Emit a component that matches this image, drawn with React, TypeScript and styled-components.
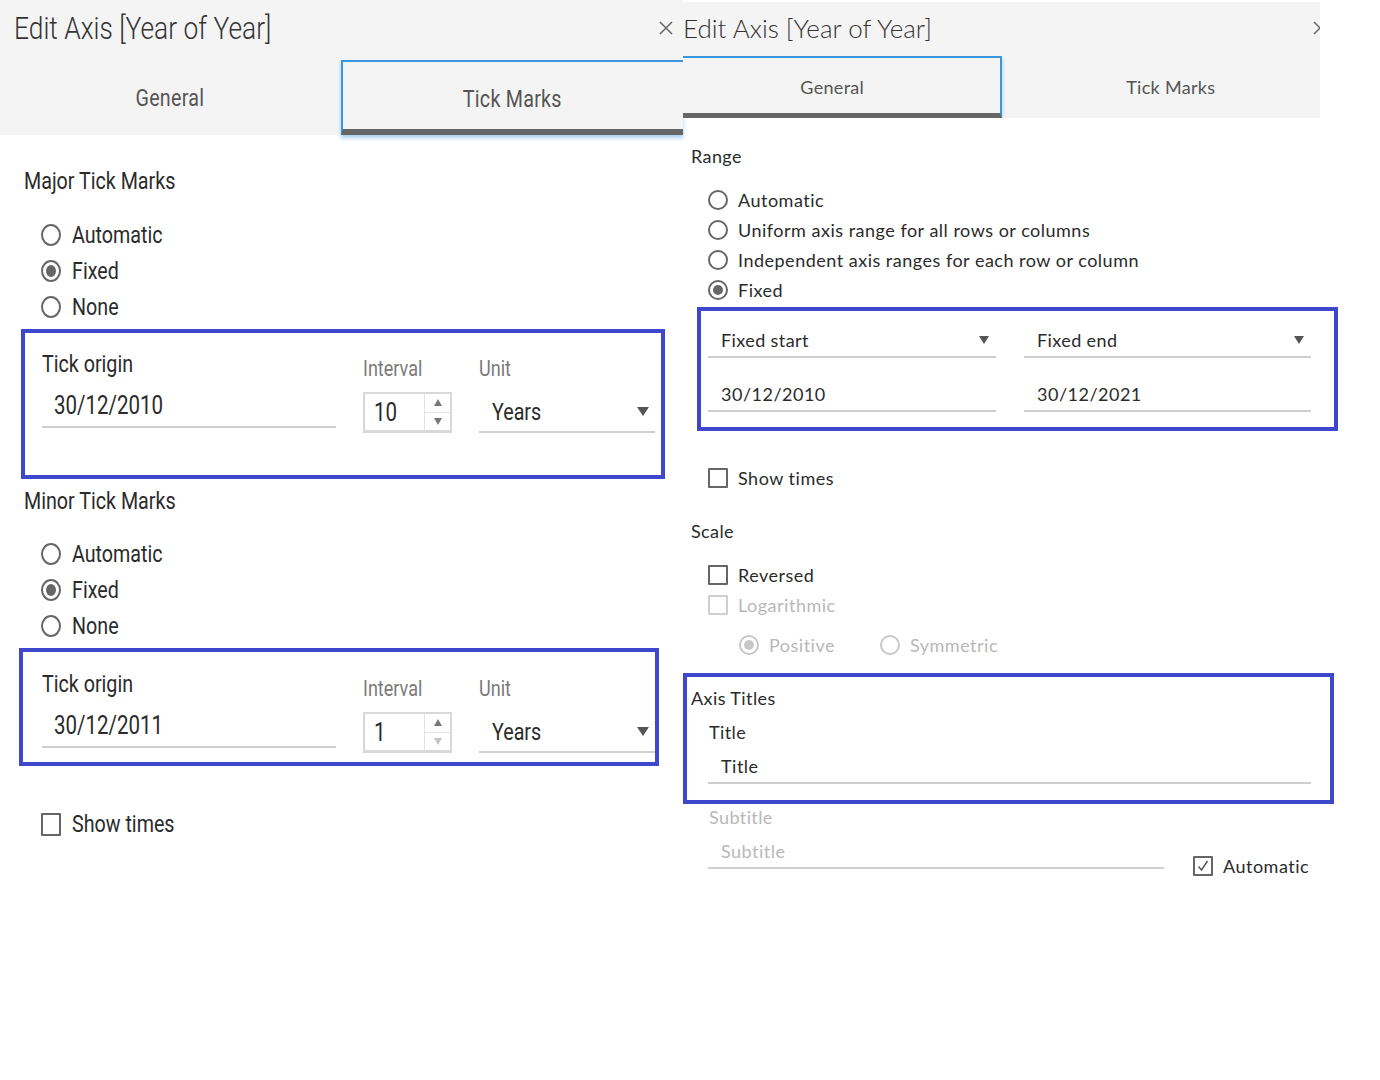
import styled, { createGlobalStyle, css } from 'styled-components';

const NARROW = 'Roboto, "Liberation Sans", sans-serif';
const SANS = 'Lato, "Open Sans", sans-serif';
const INDIGO = '#3f48cc';
const TAB_BLUE = '#3a97dd';

const GlobalStyle = createGlobalStyle`
  html, body {
    margin: 0;
    background: #fff;
  }
  * {
    box-sizing: border-box;
  }
`;

const CloseIcon = () => (
  <svg width="14" height="14" viewBox="0 0 14 14">
    <path d="M1 1 L13 13 M13 1 L1 13" stroke="#666" strokeWidth="1.5" fill="none" />
  </svg>
);

const CheckIcon = () => (
  <svg width="14" height="14" viewBox="0 0 14 14">
    <path d="M2.5 7.5 L5.5 11 L11.5 2" stroke="#555" strokeWidth="1.4" fill="none" />
  </svg>
);

export default function App() {
  return (
    <Page>
      <GlobalStyle />

      {/* left dialog: Tick Marks tab (condensed screenshot) */}
      <LeftPanel>
        <LHeader>
          <LTitleRow>
            <LTitle>
              <Cond $sx={0.85}>Edit Axis [Year of Year]</Cond>
            </LTitle>
            <CloseIcon />
          </LTitleRow>
          <Tabs $h={75}>
            <Tab $size={24}>
              <Cond $center>General</Cond>
            </Tab>
            <Tab $size={24} $active $bar={6} $pad={6} $side="left">
              <Cond $center>Tick Marks</Cond>
            </Tab>
          </Tabs>
        </LHeader>

        <LBody>
          <LSection $mt={33}>
            <Cond>Major Tick Marks</Cond>
          </LSection>
          <LOptions $mt={23}>
            <LOption>
              <Radio $w={20} $h={22} />
              <Cond>Automatic</Cond>
            </LOption>
            <LOption>
              <Radio $w={20} $h={22} $checked />
              <Cond>Fixed</Cond>
            </LOption>
            <LOption>
              <Radio $w={20} $h={22} />
              <Cond>None</Cond>
            </LOption>
          </LOptions>

          <Highlight $w={644} $h={150} $ml={-3} $mt={4}>
            <TickGrid $pt={19} $pl={17}>
              <div>
                <OriginLabel>
                  <Cond>Tick origin</Cond>
                </OriginLabel>
                <OriginInput>
                  <Cond>30/12/2010</Cond>
                </OriginInput>
              </div>
              <div>
                <SubLabel>
                  <Cond>Interval</Cond>
                </SubLabel>
                <Spinner>
                  <SpinValue>
                    <Cond>10</Cond>
                  </SpinValue>
                  <SpinArrows>
                    <SpinHalf>
                      <Tri $up />
                    </SpinHalf>
                    <SpinHalf>
                      <Tri />
                    </SpinHalf>
                  </SpinArrows>
                </Spinner>
              </div>
              <div>
                <SubLabel>
                  <Cond>Unit</Cond>
                </SubLabel>
                <UnitSelect>
                  <Cond>Years</Cond>
                  <Caret $w={12} $h={9} />
                </UnitSelect>
              </div>
            </TickGrid>
          </Highlight>

          <LSection $mt={9}>
            <Cond>Minor Tick Marks</Cond>
          </LSection>
          <LOptions $mt={22}>
            <LOption>
              <Radio $w={20} $h={22} />
              <Cond>Automatic</Cond>
            </LOption>
            <LOption>
              <Radio $w={20} $h={22} $checked />
              <Cond>Fixed</Cond>
            </LOption>
            <LOption>
              <Radio $w={20} $h={22} />
              <Cond>None</Cond>
            </LOption>
          </LOptions>

          <Highlight $w={640} $h={118} $ml={-5} $mt={4}>
            <TickGrid $pt={20} $pl={19}>
              <div>
                <OriginLabel>
                  <Cond>Tick origin</Cond>
                </OriginLabel>
                <OriginInput>
                  <Cond>30/12/2011</Cond>
                </OriginInput>
              </div>
              <div>
                <SubLabel>
                  <Cond>Interval</Cond>
                </SubLabel>
                <Spinner>
                  <SpinValue>
                    <Cond>1</Cond>
                  </SpinValue>
                  <SpinArrows>
                    <SpinHalf>
                      <Tri $up />
                    </SpinHalf>
                    <SpinHalf>
                      <Tri $muted />
                    </SpinHalf>
                  </SpinArrows>
                </Spinner>
              </div>
              <div>
                <SubLabel>
                  <Cond>Unit</Cond>
                </SubLabel>
                <UnitSelect>
                  <Cond>Years</Cond>
                  <Caret $w={12} $h={9} />
                </UnitSelect>
              </div>
            </TickGrid>
          </Highlight>

          <LOptions $mt={40}>
            <LOption>
              <Box $w={20} $h={23} />
              <Cond>Show times</Cond>
            </LOption>
          </LOptions>
        </LBody>
      </LeftPanel>

      {/* right dialog: General tab */}
      <RightPanel>
        <RHeader>
          <RTitleRow>
            <RTitle>Edit Axis [Year of Year]</RTitle>
            <RClose>
              <CloseIcon />
            </RClose>
          </RTitleRow>
          <Tabs $h={62}>
            <Tab $size={18} $active $bar={5} $pad={3} $side="right" $shift={-9}>
              General
            </Tab>
            <Tab $size={18} $shift={10}>
              Tick Marks
            </Tab>
          </Tabs>
        </RHeader>

        <RBody>
          <RSection $mt={26}>Range</RSection>
          <ROptions $mt={17}>
            <ROption>
              <Radio $w={20} $h={20} />
              Automatic
            </ROption>
            <ROption>
              <Radio $w={20} $h={20} />
              Uniform axis range for all rows or columns
            </ROption>
            <ROption>
              <Radio $w={20} $h={20} />
              Independent axis ranges for each row or column
            </ROption>
            <ROption>
              <Radio $w={20} $h={20} $checked />
              Fixed
            </ROption>
          </ROptions>

          <Highlight $w={641} $h={124} $ml={6} $mt={2}>
            <RangeGrid>
              <RSelect>
                Fixed start
                <Caret $w={11} $h={8} />
              </RSelect>
              <RSelect>
                Fixed end
                <Caret $w={11} $h={8} />
              </RSelect>
              <RInput>30/12/2010</RInput>
              <RInput>30/12/2021</RInput>
            </RangeGrid>
          </Highlight>

          <ROptions $mt={32}>
            <ROption>
              <Box $w={20} $h={20} />
              Show times
            </ROption>
          </ROptions>

          <RSection $mt={26}>Scale</RSection>
          <ROptions $mt={17}>
            <ROption>
              <Box $w={20} $h={20} />
              Reversed
            </ROption>
            <ROption $disabled>
              <Box $w={20} $h={20} $disabled />
              Logarithmic
            </ROption>
          </ROptions>
          <LogRow>
            <ROption $disabled>
              <Radio $w={20} $h={20} $checked $disabled />
              Positive
            </ROption>
            <ROption $disabled>
              <Radio $w={20} $h={20} $disabled />
              Symmetric
            </ROption>
          </LogRow>

          <Highlight $w={651} $h={131} $ml={-8} $mt={13}>
            <TitlesInner>
              <RSection $mt={0}>Axis Titles</RSection>
              <FieldLabel>Title</FieldLabel>
              <RInput $w={603}>Title</RInput>
            </TitlesInner>
          </Highlight>

          <FieldLabel $muted $mt={1}>
            Subtitle
          </FieldLabel>
          <SubtitleRow>
            <RInput $w={456} $muted>
              Subtitle
            </RInput>
            <AutoOption>
              <Box $w={20} $h={20}>
                <CheckIcon />
              </Box>
              Automatic
            </AutoOption>
          </SubtitleRow>
        </RBody>
      </RightPanel>
    </Page>
  );
}

const Page = styled.div`
  display: flex;
  align-items: flex-start;
  width: 1380px;
  height: 1080px;
  overflow: hidden;
  background: #fff;
`;

/* ---------- shared ---------- */

// the left screenshot is horizontally squeezed, so its text is narrowed
const Cond = styled.span<{ $sx?: number; $center?: boolean }>`
  display: inline-block;
  white-space: nowrap;
  transform: scaleX(${p => p.$sx ?? 0.82});
  transform-origin: ${p => (p.$center ? 'center' : 'left')} center;
`;

const Tabs = styled.div<{ $h: number }>`
  display: flex;
  height: ${p => p.$h}px;
`;

const Tab = styled.div<{
  $size: number;
  $active?: boolean;
  $bar?: number;
  $pad?: number;
  $side?: 'left' | 'right';
  $shift?: number;
}>`
  flex: 1;
  display: flex;
  align-items: center;
  justify-content: center;
  font-size: ${p => p.$size}px;
  letter-spacing: 0.3px;
  color: #555;
  background: #f4f4f4;
  ${p => p.$shift && p.$shift > 0 && `padding-left: ${p.$shift * 2}px;`}
  ${p => p.$shift && p.$shift < 0 && `padding-right: ${-p.$shift * 2}px;`}

  ${p =>
    p.$active &&
    css`
      position: relative;
      z-index: 1;
      padding-top: ${p.$pad}px;
      border-top: 2px solid ${TAB_BLUE};
      border-${p.$side}: 2px solid ${TAB_BLUE};
      border-bottom: ${p.$bar}px solid #666;
      box-shadow: 0 3px 4px rgba(58, 151, 221, 0.45);
    `}
`;

const Highlight = styled.div<{ $w: number; $h: number; $ml: number; $mt: number }>`
  width: ${p => p.$w}px;
  height: ${p => p.$h}px;
  margin-left: ${p => p.$ml}px;
  margin-top: ${p => p.$mt}px;
  border: 4px solid ${INDIGO};
  overflow: hidden;
`;

const Radio = styled.span<{ $w: number; $h: number; $checked?: boolean; $disabled?: boolean }>`
  position: relative;
  flex: none;
  width: ${p => p.$w}px;
  height: ${p => p.$h}px;
  border: 2px solid ${p => (p.$disabled ? '#c8c8c8' : '#666')};
  border-radius: 50%;
  background: #fff;

  ${p =>
    p.$checked &&
    css`
      &::after {
        content: '';
        position: absolute;
        left: 3px;
        right: 3px;
        top: 3px;
        bottom: 3px;
        border-radius: 50%;
        background: ${p.$disabled ? '#c8c8c8' : '#666'};
      }
    `}
`;

const Box = styled.span<{ $w: number; $h: number; $disabled?: boolean }>`
  flex: none;
  display: flex;
  align-items: center;
  justify-content: center;
  width: ${p => p.$w}px;
  height: ${p => p.$h}px;
  border: 2px solid ${p => (p.$disabled ? '#cfcfcf' : '#666')};
  border-radius: 1px;
  background: #fff;
`;

const Caret = styled.span<{ $w: number; $h: number }>`
  width: 0;
  height: 0;
  border-left: ${p => p.$w / 2}px solid transparent;
  border-right: ${p => p.$w / 2}px solid transparent;
  border-top: ${p => p.$h}px solid #555;
`;

const Tri = styled.span<{ $up?: boolean; $muted?: boolean }>`
  width: 0;
  height: 0;
  border-left: 4px solid transparent;
  border-right: 4px solid transparent;
  ${p =>
    p.$up
      ? css`border-bottom: 7px solid ${p.$muted ? '#c4c4c4' : '#777'};`
      : css`border-top: 7px solid ${p.$muted ? '#c4c4c4' : '#777'};`}
`;

/* ---------- left dialog ---------- */

const LeftPanel = styled.div`
  flex: none;
  width: 683px;
  font-family: ${NARROW};
  color: #2b2b2b;
`;

const LHeader = styled.div`
  height: 135px;
  background: #f4f4f4;
  display: flex;
  flex-direction: column;
`;

const LTitleRow = styled.div`
  height: 60px;
  display: flex;
  align-items: center;
  justify-content: space-between;
  padding: 0 10px 4px 14px;
`;

const LTitle = styled.h1`
  margin: 0;
  font-size: 31px;
  font-weight: 300;
  color: #333;
`;

const LBody = styled.div`
  padding-left: 24px;
`;

const LSection = styled.h2<{ $mt: number }>`
  margin: ${p => p.$mt}px 0 0;
  font-size: 24px;
  line-height: 26px;
  font-weight: 400;
  color: #2b2b2b;
`;

const LOptions = styled.div<{ $mt: number }>`
  display: flex;
  flex-direction: column;
  margin: ${p => p.$mt}px 0 0 17px;
`;

const LOption = styled.label`
  display: flex;
  align-items: center;
  gap: 11px;
  height: 36px;
  font-size: 24px;
`;

const TickGrid = styled.div<{ $pt: number; $pl: number }>`
  display: grid;
  grid-template-columns: 294px 89px 176px;
  column-gap: 27px;
  padding: ${p => p.$pt}px 0 0 ${p => p.$pl}px;
`;

const OriginLabel = styled.div`
  font-size: 24px;
  line-height: 24px;
  color: #2b2b2b;
`;

const OriginInput = styled.div`
  margin-top: 4px;
  height: 48px;
  padding: 4px 0 0 12px;
  display: flex;
  align-items: center;
  font-size: 25px;
  border-bottom: 2px solid #cfcfcf;
`;

const SubLabel = styled.div`
  margin-top: 5px;
  font-size: 22px;
  line-height: 24px;
  color: #7a7a7a;
`;

const Spinner = styled.div`
  margin-top: 11px;
  height: 41px;
  display: flex;
  border: 2px solid #d9d9d9;
  border-bottom-width: 3px;
`;

const SpinValue = styled.div`
  flex: 1;
  display: flex;
  align-items: center;
  padding-left: 9px;
  font-size: 25px;
`;

const SpinArrows = styled.div`
  width: 26px;
  display: flex;
  flex-direction: column;
  border-left: 1px solid #e2e2e2;
`;

const SpinHalf = styled.div`
  flex: 1;
  display: flex;
  align-items: center;
  justify-content: center;

  & + & {
    border-top: 1px solid #e6e6e6;
  }
`;

const UnitSelect = styled.div`
  margin-top: 11px;
  height: 41px;
  display: flex;
  align-items: center;
  justify-content: space-between;
  padding: 0 6px 0 13px;
  font-size: 24px;
  border-bottom: 2px solid #cfcfcf;
`;

/* ---------- right dialog ---------- */

const RightPanel = styled.div`
  flex: none;
  width: 660px;
  font-family: ${SANS};
  color: #2b2b2b;
`;

const RHeader = styled.div`
  margin-top: 2px;
  width: 637px;
  height: 116px;
  background: #f4f4f4;
  overflow: hidden;
  display: flex;
  flex-direction: column;
`;

const RTitleRow = styled.div`
  height: 54px;
  display: flex;
  align-items: center;
  justify-content: space-between;
  padding-bottom: 2px;
`;

const RTitle = styled.h1`
  margin: 0;
  font-size: 26px;
  font-weight: 300;
  color: #333;
`;

const RClose = styled.span`
  display: flex;
  margin-right: -7px;
`;

const RBody = styled.div`
  padding-left: 8px;
`;

const RSection = styled.h2<{ $mt: number }>`
  margin: ${p => p.$mt}px 0 0;
  font-size: 18px;
  line-height: 24px;
  font-weight: 400;
  letter-spacing: 0.4px;
  color: #2b2b2b;
`;

const ROptions = styled.div<{ $mt: number }>`
  display: flex;
  flex-direction: column;
  margin: ${p => p.$mt}px 0 0 17px;
`;

const ROption = styled.label<{ $disabled?: boolean }>`
  display: flex;
  align-items: center;
  gap: 10px;
  height: 30px;
  font-size: 18px;
  letter-spacing: 0.5px;
  color: ${p => (p.$disabled ? '#b8b8b8' : '#2b2b2b')};
`;

const LogRow = styled.div`
  display: flex;
  gap: 45px;
  margin: 10px 0 0 48px;
`;

const RangeGrid = styled.div`
  display: grid;
  grid-template-columns: 288px 287px;
  column-gap: 28px;
  row-gap: 19px;
  padding: 12px 0 0 7px;
`;

const RSelect = styled.div`
  height: 35px;
  display: flex;
  align-items: center;
  justify-content: space-between;
  padding: 0 7px 0 13px;
  font-size: 18px;
  letter-spacing: 0.4px;
  border-bottom: 2px solid #cfcfcf;
`;

const RInput = styled.div<{ $w?: number; $muted?: boolean }>`
  ${p => p.$w && `width: ${p.$w}px;`}
  height: 35px;
  display: flex;
  align-items: center;
  padding-left: 13px;
  font-size: 18px;
  letter-spacing: 0.5px;
  color: ${p => (p.$muted ? '#b8b8b8' : '#2b2b2b')};
  border-bottom: 2px solid #cfcfcf;
`;

const TitlesInner = styled.div`
  padding: 9px 0 0 4px;

  & > ${RInput} {
    margin: 5px 0 0 17px;
  }
`;

const FieldLabel = styled.div<{ $muted?: boolean; $mt?: number }>`
  margin: ${p => p.$mt ?? 10}px 0 0 18px;
  font-size: 18px;
  line-height: 24px;
  letter-spacing: 0.4px;
  color: ${p => (p.$muted ? '#b8b8b8' : '#2b2b2b')};
`;

const SubtitleRow = styled.div`
  display: flex;
  align-items: flex-start;
  gap: 29px;
  margin: 5px 0 0 17px;
`;

const AutoOption = styled(ROption)`
  margin-top: 17px;
`;
